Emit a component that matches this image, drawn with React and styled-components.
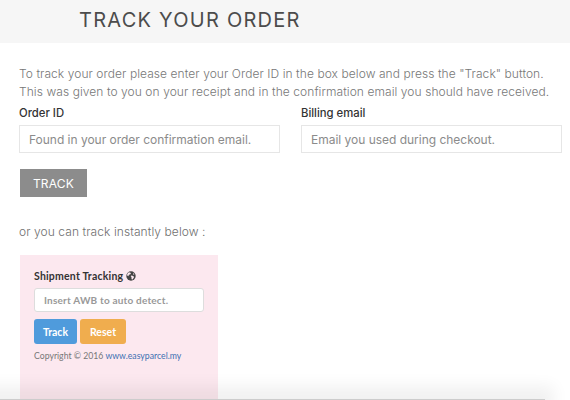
import React from 'react';
import styled, { createGlobalStyle } from 'styled-components';

const Global = createGlobalStyle`
  html, body { margin: 0; padding: 0; background: #fff; height: 400px; overflow: hidden; }
  body { font-family: Inter, "Liberation Sans", sans-serif; }
  * { box-sizing: border-box; }
`;
const Page = styled.div`position: relative; width: 570px; height: 400px; overflow: hidden;`;
const Header = styled.header`height: 43px; background: #f6f6f6; padding: 7px 0 0 79px;`;
const Title = styled.h1`margin: 0; font-size: 20px; line-height: 26px; font-weight: 400; color: #4c4c4c; letter-spacing: 1.25px;`;
const Content = styled.main`padding: 22px 0 0 19px;`;
const Intro = styled.p`margin: 0; font-size: 12px; line-height: 18px; font-weight: 300; color: #777; letter-spacing: .07px; white-space: nowrap;`;
const Fields = styled.div`display: flex; gap: 21px; margin-top: 5px;`;
const Field = styled.div`width: 261px; display: flex; flex-direction: column;`;
const Label = styled.label`font-size: 11.3px; line-height: 15px; font-weight: 500; color: #333;`;
const Input = styled.input`
  height: 28px; margin-top: 4px; width: 100%; border: 1px solid #e6e6e6; padding: 0 9px; outline: 0; background: #fff;
  font: 400 12px Inter, sans-serif; letter-spacing: -.02px;
  &::placeholder { color: #8b8b8b; opacity: 1; }
`;
const TrackButton = styled.button`
  display: block; margin-top: 16px; margin-left: 1px; width: 67px; height: 28px; border: 0; background: #8c8c8c; color: #fff;
  font: 400 12px Inter, sans-serif; letter-spacing: .2px; padding: 0;
`;
const OrText = styled.p`margin: 27px 0 0; font-size: 12px; line-height: 16px; font-weight: 300; color: #6f6f6f; letter-spacing: .08px;`;
const Panel = styled.section`margin: 15px 0 0 1px; width: 198px; height: 160px; background: #fce8ef; padding: 14px 14px; font-family: Lato, "Noto Sans", sans-serif;`;
const PanelTitle = styled.div`display: flex; align-items: center; gap: 3px; font-size: 10.5px; line-height: 14px; font-weight: 700; color: #333; letter-spacing: .2px;`;
const AwbInput = styled.input`
  display: block; width: 170px; height: 24px; margin-top: 5px; border: 1px solid #ddd; border-radius: 3px; background: #fff; outline: 0; padding: 0 9px;
  font: 700 10px Lato, sans-serif; letter-spacing: .2px;
  &::placeholder { color: #999; opacity: 1; }
`;
const Actions = styled.div`display: flex; gap: 3px; margin-top: 7px;`;
const ActionButton = styled.button`
  width: ${p => p.$w}px; height: 25px; border: 0; border-radius: 3px; background: ${p => p.$bg}; color: #fff;
  font: 700 10.5px Lato, sans-serif; padding: 0;
`;
const Copy = styled.p`margin: 6px 0 0; font-size: 8.7px; line-height: 12px; color: #777; white-space: nowrap;`;
const CopyLink = styled.a`color: #3d70b2; text-decoration: none;`;
const BottomShade = styled.div`
  position: absolute; left: -20px; top: 399px; width: 565px; height: 10px; background: #ccc;
  box-shadow: 0 -4px 16px 9px rgba(0,0,0,.06);
`;

export default function App() {
  return (
    <Page>
      <Global />
      <Header><Title>TRACK YOUR ORDER</Title></Header>
      <Content>
        <Intro>To track your order please enter your Order ID in the box below and press the "Track" button.</Intro>
        <Intro>This was given to you on your receipt and in the confirmation email you should have received.</Intro>
        <Fields>
          <Field><Label>Order ID</Label><Input placeholder="Found in your order confirmation email." /></Field>
          <Field><Label>Billing email</Label><Input placeholder="Email you used during checkout." /></Field>
        </Fields>
        <TrackButton>TRACK</TrackButton>
        <OrText>or you can track instantly below :</OrText>
        <Panel>
          <PanelTitle>Shipment Tracking
            <svg width="10" height="10" viewBox="0 0 10 10">
              <circle cx="5" cy="5" r="4.7" fill="#444" />
              <path d="M3 1.2 5 2l-.6 1.3-1.4.4-.7 1.5L1 4.2C1.3 2.9 2 1.8 3 1.2ZM5.2 4.6l2.2.5.6 1.2-1.4 2.2-1-.3-.2-2.1-.7-.8ZM7 1.8l1.5 1.9-1.4-.1Z" fill="#fce8ef" />
            </svg>
          </PanelTitle>
          <AwbInput placeholder="Insert AWB to auto detect." />
          <Actions>
            <ActionButton $w={43} $bg="#4f9bdc">Track</ActionButton>
            <ActionButton $w={46} $bg="#f0ad4e">Reset</ActionButton>
          </Actions>
          <Copy>Copyright © 2016 <CopyLink>www.easyparcel.my</CopyLink></Copy>
        </Panel>
      </Content>
      <BottomShade />
    </Page>
  );
}
